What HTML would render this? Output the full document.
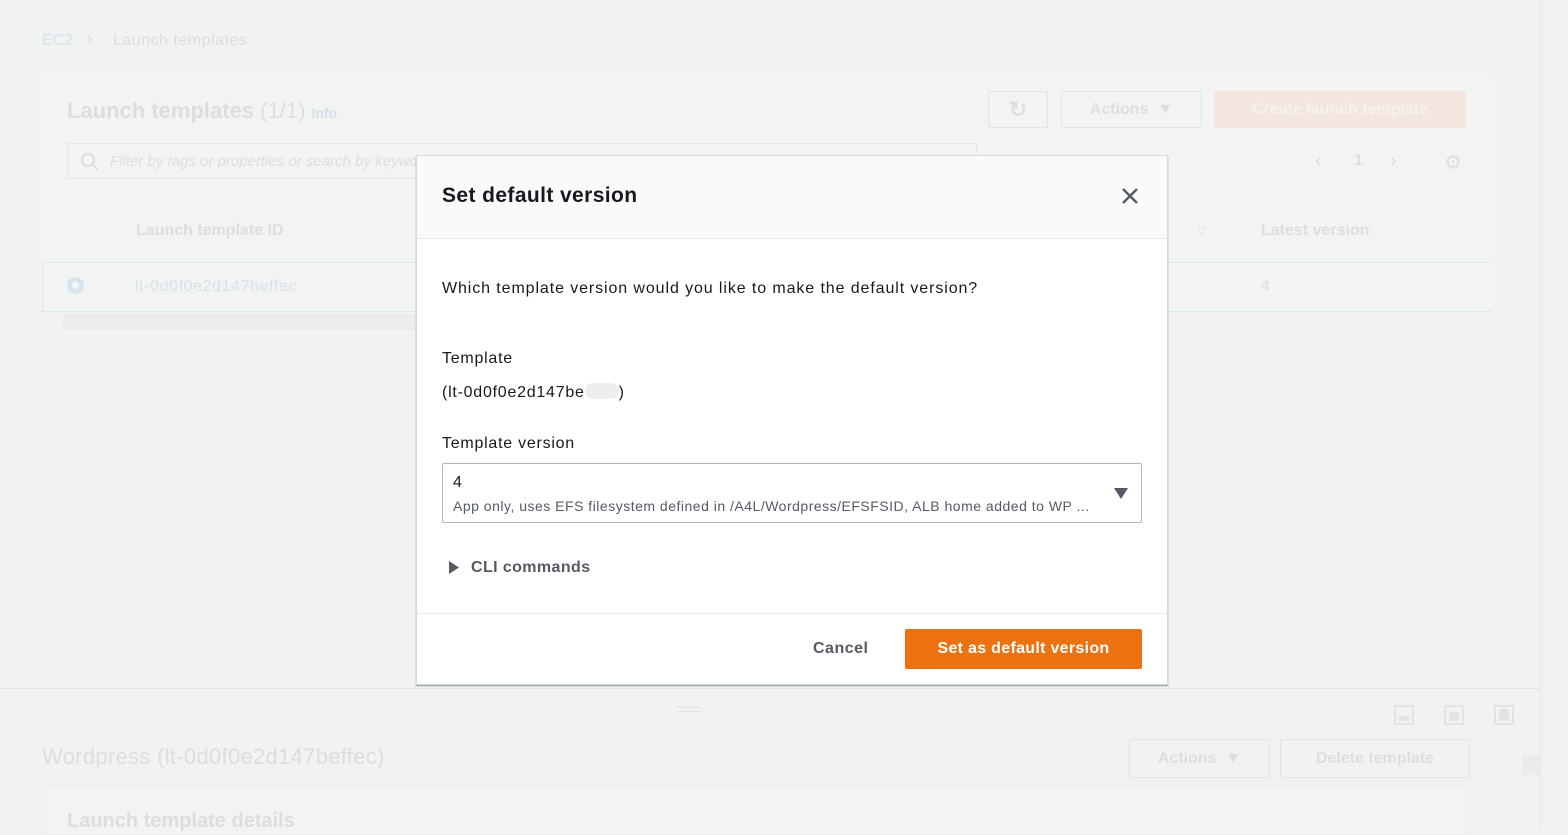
<!DOCTYPE html>
<html><head><meta charset="utf-8"><style>
*{box-sizing:border-box;margin:0;padding:0}
body{width:1568px;height:830px;overflow:hidden;background:#f1f2f2;font-family:"Liberation Sans",sans-serif;position:relative;color:#16191f}
.a{position:absolute}
.f{color:#dcdede}
.btn{position:absolute;border:1px solid #e2e4e4;border-radius:2px;color:#dddfdf;font-weight:bold;font-size:16px;display:flex;align-items:center;justify-content:center}
.t{font-size:16px;letter-spacing:0.75px}
</style></head><body>
<div class="a" style="left:1540px;top:0;width:1px;height:830px;background:#e4e6e6"></div>
<div class="a" style="left:42px;top:32px;font-size:16px;color:#d6e1ec">EC2</div>
<div class="a f" style="left:86px;top:28px;font-size:20px">›</div>
<div class="a f" style="left:113px;top:32px;font-size:16px;letter-spacing:0.5px">Launch templates</div>
<div class="a" style="left:42px;top:74px;width:1450px;height:240px;background:#f2f3f3"></div>
<div class="a f" style="left:67px;top:98px;font-size:22px;font-weight:bold">Launch templates <span style="font-weight:normal">(1/1)</span> <span style="font-size:14px;color:#d4e0ea">Info</span></div>
<div class="btn" style="left:988px;top:91px;width:60px;height:37px;font-size:22px">↻</div>
<div class="btn" style="left:1061px;top:91px;width:141px;height:37px">Actions &nbsp;▼</div>
<div class="btn" style="left:1214px;top:91px;width:252px;height:37px;background:#f2e6de;border-color:#f2e6de;color:#f8f1ec">Create launch template</div>
<div class="a" style="left:67px;top:143px;width:910px;height:36px;border:1px solid #e4e6e6"></div>
<svg class="a" style="left:80px;top:152px" width="20" height="20"><circle cx="8" cy="8" r="6" fill="none" stroke="#dcdede" stroke-width="2"/><path d="M12 12L18 18" stroke="#dcdede" stroke-width="2"/></svg>
<div class="a f" style="left:110px;top:153px;font-size:15px;font-style:italic">Filter by tags or properties or search by keyword</div>
<div class="a f" style="left:1315px;top:150px;font-size:20px">‹</div>
<div class="a f" style="left:1354px;top:152px;font-size:16px;font-weight:bold">1</div>
<div class="a f" style="left:1390px;top:150px;font-size:20px">›</div>
<div class="a f" style="left:1444px;top:150px;font-size:20px">⚙</div>
<div class="a f" style="left:136px;top:222px;font-size:16px;font-weight:bold">Launch template ID</div>
<div class="a f" style="left:1197px;top:224px;font-size:12px">▽</div>
<div class="a f" style="left:1261px;top:222px;font-size:16px;font-weight:bold">Latest version</div>
<div class="a" style="left:42px;top:262px;width:1450px;height:50px;border-top:1px solid #dbe6ee;border-bottom:1px solid #dbe6ee;border-left:1px solid #dbe6ee"></div>
<div class="a" style="left:67px;top:277px;width:17px;height:17px;border-radius:50%;border:5px solid #d8e4ee;background:#f4f6f6"></div>
<div class="a" style="left:135px;top:278px;font-size:16px;color:#d8e2ea;letter-spacing:0.6px">lt-0d0f0e2d147beffec</div>
<div class="a f" style="left:1261px;top:278px;font-size:16px">4</div>
<div class="a" style="left:63px;top:314px;width:360px;height:16px;background:#ebeded"></div>
<div class="a" style="left:0;top:688px;width:1540px;height:1px;background:#e2e4e4"></div>
<div class="a" style="left:677px;top:707px;width:24px;height:5px;border-top:1px solid #e2e4e4;border-bottom:1px solid #e2e4e4"></div>
<div class="a" style="left:1394px;top:705px;width:20px;height:20px;border:2px solid #e2e4e4"><div style="position:absolute;left:3px;bottom:2px;width:10px;height:5px;background:#e2e4e4"></div></div>
<div class="a" style="left:1444px;top:705px;width:20px;height:20px;border:2px solid #e2e4e4"><div style="position:absolute;left:3px;bottom:2px;width:10px;height:9px;background:#e2e4e4"></div></div>
<div class="a" style="left:1494px;top:705px;width:20px;height:20px;border:2px solid #e2e4e4"><div style="position:absolute;left:3px;top:2px;width:10px;height:12px;background:#e2e4e4"></div></div>
<div class="a f" style="left:42px;top:744px;font-size:22px;letter-spacing:0.3px">Wordpress (lt-0d0f0e2d147beffec)</div>
<div class="btn" style="left:1129px;top:739px;width:141px;height:39px">Actions &nbsp;▼</div>
<div class="btn" style="left:1280px;top:739px;width:190px;height:39px">Delete template</div>
<div class="a" style="left:42px;top:785px;width:1428px;height:50px;border:1px solid #eceeee;background:#f2f3f3"></div>
<div class="a f" style="left:67px;top:810px;font-size:20px;font-weight:bold">Launch template details</div>
<div class="a" style="left:1522px;top:755px;width:18px;height:20px;background:#eaecec"></div>

<div class="a" style="left:416px;top:155px;width:752px;height:530px;background:#fff;border:1px solid #d5dbdb;box-shadow:0 1px 1px #879596">
 <div style="height:83px;background:#fafafa;border-bottom:1px solid #eaeded;position:relative">
  <div class="a" style="left:25px;top:28px;font-size:21px;font-weight:bold;letter-spacing:0.4px">Set default version</div>
  <svg class="a" style="left:704px;top:31px" width="18" height="18" viewBox="0 0 18 18"><path d="M2 2L16 16M16 2L2 16" stroke="#545b64" stroke-width="2.4"/></svg>
 </div>
 <div class="a t" style="left:25px;top:124px;letter-spacing:0.9px">Which template version would you like to make the default version?</div>
 <div class="a t" style="left:25px;top:194px">Template</div>
 <div class="a t" style="left:25px;top:227px">(lt-0d0f0e2d147be<span style="display:inline-block;width:34px;height:16px;background:#eee;border-radius:8px;vertical-align:-2px"></span>)</div>
 <div class="a t" style="left:25px;top:279px">Template version</div>
 <div class="a" style="left:25px;top:307px;width:700px;height:60px;border:1px solid #aab7b8;border-radius:2px">
  <div class="a" style="left:10px;top:10px;font-size:16px">4</div>
  <div class="a" style="left:10px;top:34px;font-size:14px;color:#545b64;letter-spacing:0.5px">App only, uses EFS filesystem defined in /A4L/Wordpress/EFSFSID, ALB home added to WP ...</div>
  <svg class="a" style="left:671px;top:24px" width="14" height="11"><path d="M0 0H14L7 11Z" fill="#545b64"/></svg>
 </div>
 <svg class="a" style="left:32px;top:405px" width="10" height="13"><path d="M0 0L10 6.5L0 13Z" fill="#545b64"/></svg>
 <div class="a" style="left:54px;top:403px;font-size:16px;font-weight:bold;color:#545b64;letter-spacing:0.4px">CLI commands</div>
 <div class="a" style="left:0;top:457px;width:750px;height:1px;background:#eaeded"></div>
 <div class="a" style="left:396px;top:484px;font-size:16px;font-weight:bold;color:#545b64;letter-spacing:0.5px">Cancel</div>
 <div class="a" style="left:488px;top:473px;width:237px;height:40px;background:#ec7211;border-radius:2px;color:#fff;font-size:16px;font-weight:bold;display:flex;align-items:center;justify-content:center;letter-spacing:0.3px">Set as default version</div>
</div>
</body></html>
